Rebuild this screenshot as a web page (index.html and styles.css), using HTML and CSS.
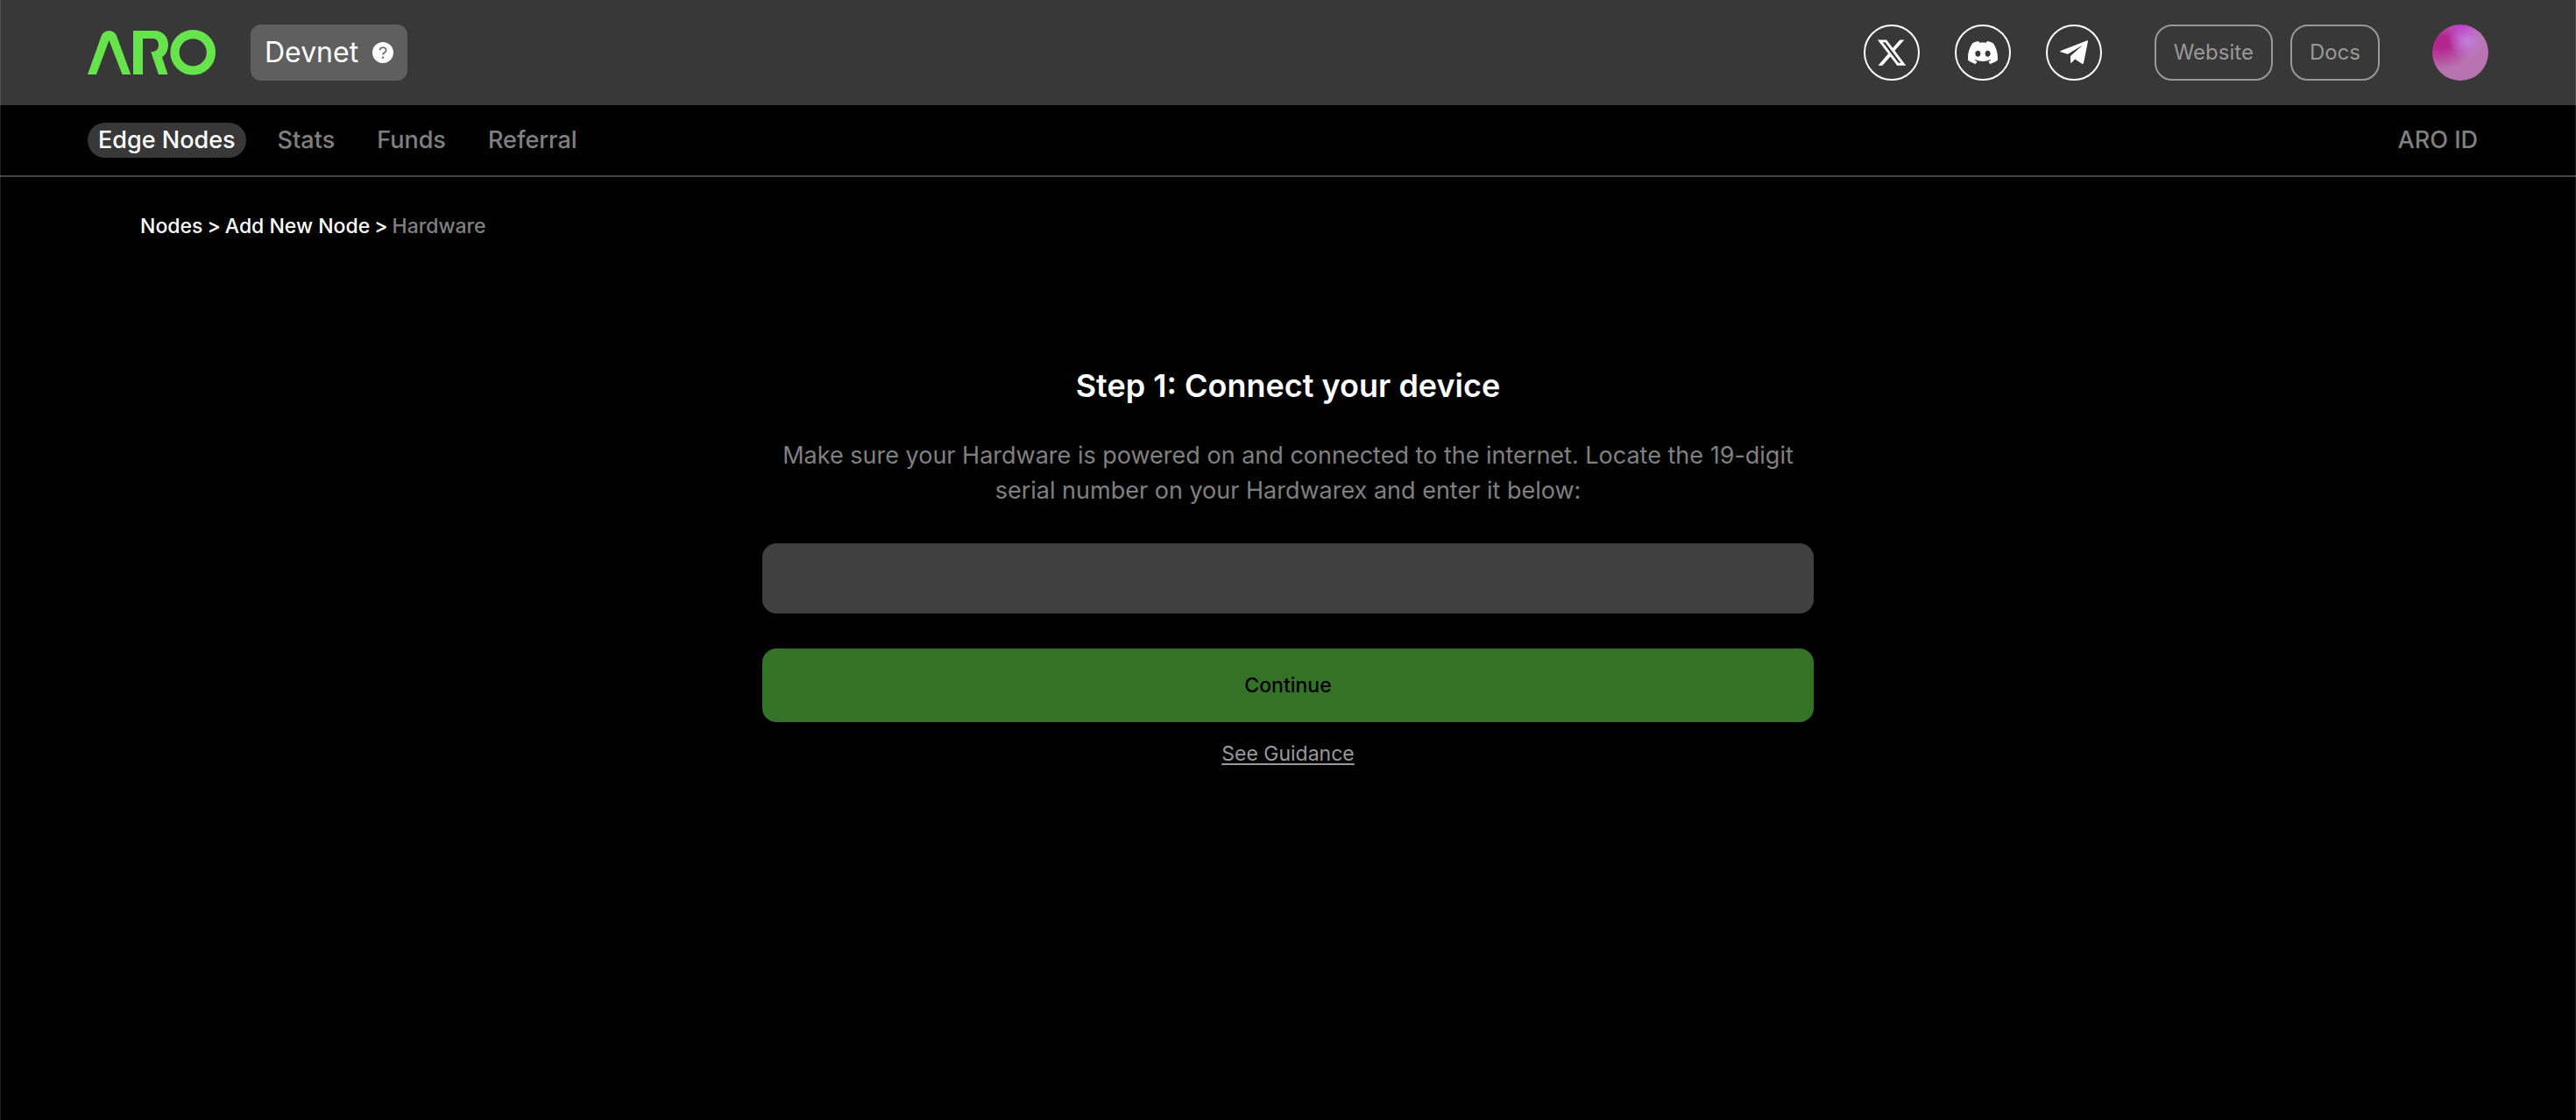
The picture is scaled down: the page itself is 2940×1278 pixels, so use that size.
FILE: index.html
```html
<!DOCTYPE html>
<html lang="en">
<head>
<meta charset="utf-8">
<meta name="viewport" content="width=device-width, initial-scale=1">
<title>ARO – Add New Node</title>
<link rel="stylesheet" href="styles.css">
</head>
<body>
<header class="topbar">
  <a class="logo" href="#" aria-label="ARO">
    <svg width="146" height="52" viewBox="0 0 146 52" aria-hidden="true">
      <path fill="currentColor" d="M0 51 15.5 7.5Q18 1 24.5 1 31 1 33.3 7.5L49.3 51H39.5L24.5 12 10 51Z"/>
      <path fill="currentColor" d="M52 2Q52 1 53 1H76C86 1 92 8 92 17 92 23 89.5 28 85 31.3L91.5 51H81L72.3 25.3C78 25 81 22 81 17.5 81 13 78.5 10 74.5 10H63V51H52Z"/>
      <circle cx="120.2" cy="25.8" r="20.7" fill="none" stroke="currentColor" stroke-width="10.2"/>
    </svg>
  </a>
  <button class="network" type="button">
    Devnet
    <svg width="24" height="24" viewBox="0 0 24 24" aria-hidden="true">
      <circle cx="12" cy="12" r="12" fill="#fff"/>
      <path d="M8.3 9.4C8.5 7.4 10 6.3 12 6.3s3.7 1.2 3.7 3c0 2.6-3.7 2.6-3.7 5.2" fill="none" stroke="#5f5f5f" stroke-width="1.6"/>
      <circle cx="12" cy="17.6" r="1.2" fill="#5f5f5f"/>
    </svg>
  </button>
  <div class="actions">
    <div class="socials">
      <a class="social" href="#" aria-label="X">
        <svg width="36" height="36" viewBox="0 0 24 24"><path fill="currentColor" d="M18.244 2.25h3.308l-7.227 8.26 8.502 11.24H16.17l-5.214-6.817L4.99 21.75H1.68l7.73-8.835L1.254 2.25H8.08l4.713 6.231zm-1.161 17.52h1.833L7.084 4.126H5.117z"/></svg>
      </a>
      <a class="social" href="#" aria-label="Discord">
        <svg width="34" height="34" viewBox="0 0 24 24"><path fill="currentColor" d="M20.317 4.3698a19.7913 19.7913 0 00-4.8851-1.5152.0741.0741 0 00-.0785.0371c-.211.3753-.4447.8648-.6083 1.2495-1.8447-.2762-3.68-.2762-5.4868 0-.1636-.3933-.4058-.8742-.6177-1.2495a.077.077 0 00-.0785-.037 19.7363 19.7363 0 00-4.8852 1.515.0699.0699 0 00-.0321.0277C.5334 9.0458-.319 13.5799.0992 18.0578a.0824.0824 0 00.0312.0561c2.0528 1.5076 4.0413 2.4228 5.9929 3.0294a.0777.0777 0 00.0842-.0276c.4616-.6304.8731-1.2952 1.226-1.9942a.076.076 0 00-.0416-.1057c-.6528-.2476-1.2743-.5495-1.8722-.8923a.077.077 0 01-.0076-.1277c.1258-.0943.2517-.1923.3718-.2914a.0743.0743 0 01.0776-.0105c3.9278 1.7933 8.18 1.7933 12.0614 0a.0739.0739 0 01.0785.0095c.1202.099.246.1981.3728.2924a.077.077 0 01-.0066.1276 12.2986 12.2986 0 01-1.873.8914.0766.0766 0 00-.0407.1067c.3604.698.7719 1.3628 1.225 1.9932a.076.076 0 00.0842.0286c1.961-.6067 3.9495-1.5219 6.0023-3.0294a.077.077 0 00.0313-.0552c.5004-5.177-.8382-9.6739-3.5485-13.6604a.061.061 0 00-.0312-.0286zM8.02 15.3312c-1.1825 0-2.1569-1.0857-2.1569-2.419 0-1.3332.9555-2.4189 2.157-2.4189 1.2108 0 2.1757 1.0952 2.1568 2.419 0 1.3332-.9555 2.4189-2.1569 2.4189zm7.9748 0c-1.1825 0-2.1569-1.0857-2.1569-2.419 0-1.3332.9554-2.4189 2.1569-2.4189 1.2108 0 2.1757 1.0952 2.1568 2.419 0 1.3332-.946 2.4189-2.1568 2.4189z"/></svg>
      </a>
      <a class="social" href="#" aria-label="Telegram">
        <svg width="32" height="28" viewBox="0 0 32 28"><path fill="currentColor" d="M31 .3Q32 0 32 1.200L27 26Q26.500 27.500 25.200 26.800L17.300 21.600 13 25.800Q12.200 26.300 12.200 25L12 18 26 5.500 9 15.800.8 13.200Q-.6 12.500.8 11.900Z"/></svg>
      </a>
    </div>
    <div class="links">
      <a class="outline" href="#">Website</a>
      <a class="outline" href="#">Docs</a>
    </div>
    <button class="avatar" type="button" aria-label="Account"></button>
  </div>
</header>
<nav class="tabs">
  <a class="tab current" href="#">Edge Nodes</a>
  <a class="tab" href="#">Stats</a>
  <a class="tab" href="#">Funds</a>
  <a class="tab" href="#">Referral</a>
  <a class="tab last" href="#">ARO ID</a>
</nav>
<main class="page">
  <nav class="crumbs" aria-label="Breadcrumb">
    <a href="#">Nodes</a><span>&gt;</span><a href="#">Add New Node</a><span>&gt;</span><span class="here">Hardware</span>
  </nav>
  <form class="step">
    <h1>Step 1: Connect your device</h1>
    <label for="serial">Make sure your Hardware is powered on and connected to the internet. Locate the 19-digit serial number on your Hardwarex and enter it below:</label>
    <input id="serial" type="text">
    <button class="submit" type="button">Continue</button>
    <a class="guidance" href="#">See Guidance</a>
  </form>
</main>
</body>
</html>
```
FILE: styles.css
```css
* {
  box-sizing: border-box;
}

body {
  margin: 0;
  min-height: 100vh;
  background: #000;
  color: #fff;
  font-family: Inter, "Liberation Sans", sans-serif;
  font-size: 23px;
  line-height: 32px;
}

/* hairline frame down both sides of the window */
body::after {
  content: "";
  position: fixed;
  inset: 0;
  border: solid rgba(255, 255, 255, 0.12);
  border-width: 0 1px;
  pointer-events: none;
}

a {
  color: inherit;
  text-decoration: none;
}

button,
input {
  border: 0;
  color: inherit;
  font: inherit;
}

.topbar {
  display: flex;
  align-items: center;
  gap: 40px;
  padding: 28px 100px;
  background: #383838;
}

.logo {
  display: flex;
  color: #67e34c;
}

.network {
  display: flex;
  align-items: center;
  gap: 16px;
  height: 64px;
  padding: 0 16px;
  border-radius: 12px;
  background: #5f5f5f;
  font-size: 32px;
}

.actions {
  display: flex;
  gap: 60px;
  margin-left: auto;
}

.socials {
  display: flex;
  gap: 40px;
}

.social {
  display: flex;
  align-items: center;
  justify-content: center;
  width: 64px;
  height: 64px;
  border: 2px solid #fff;
  border-radius: 50%;
}

.links {
  display: flex;
  gap: 20px;
}

.outline {
  padding: 14px 20px;
  border: 2px solid #999;
  border-radius: 20px;
  color: #999;
  font-size: 24px;
}

.avatar {
  width: 64px;
  height: 64px;
  border-radius: 50%;
  background:
    radial-gradient(circle at 62% 30%, #c182d8 0, rgba(193, 130, 216, 0) 34%),
    radial-gradient(ellipse at 55% 0, #c035d0 0, rgba(192, 53, 208, 0) 40%),
    radial-gradient(ellipse at 14% 32%, #b3268f 12%, rgba(179, 38, 143, 0) 50%),
    #b873b0;
}

.tabs {
  display: flex;
  gap: 24px;
  padding: 20px 100px;
  border-bottom: 2px solid #444;
  color: #808080;
  font-size: 27px;
  font-weight: 500;
  line-height: 40px;
}

.tab {
  padding: 0 12px;
  border-radius: 20px;
}

.current {
  background: #383838;
  color: #fff;
}

.last {
  margin-left: auto;
}

.page {
  padding: 40px 160px;
}

.crumbs {
  display: flex;
  gap: 5px;
  font-weight: 500;
}

.here {
  color: #808080;
}

.step {
  display: flex;
  flex-direction: column;
  align-items: center;
  max-width: 1200px;
  margin: 138px auto 0;
  text-align: center;
}

.step h1 {
  margin: 0 0 32px;
  font-size: 36px;
  font-weight: 600;
  line-height: 56px;
}

.step label {
  margin-bottom: 40px;
  color: #808080;
  font-size: 27px;
  line-height: 40px;
}

.step input {
  width: 100%;
  height: 80px;
  margin-bottom: 40px;
  padding: 0 24px;
  border-radius: 16px;
  background: #404040;
}

.submit {
  width: 100%;
  height: 84px;
  margin-bottom: 20px;
  border-radius: 16px;
  background: #347228;
  color: #000;
  font-weight: 500;
}

.guidance {
  color: #999;
  text-decoration: underline;
  text-underline-offset: 3px;
}
```
